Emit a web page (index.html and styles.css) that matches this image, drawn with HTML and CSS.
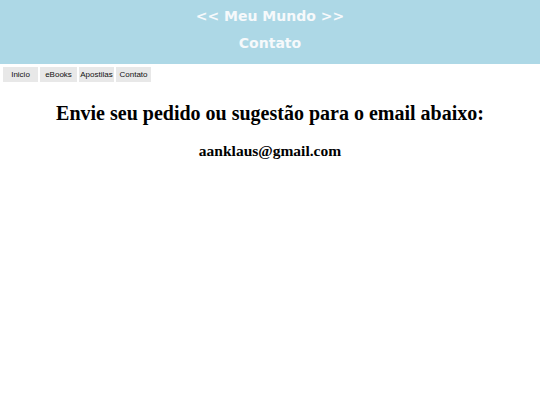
FILE: index.html
```html
<!DOCTYPE html>
<html lang="pt">
<head>
<meta charset="utf-8">
<title>Contato</title>
<link rel="stylesheet" href="styles.css">
</head>
<body>
<header class="topo">
  <div class="titulo">&lt;&lt; Meu Mundo &gt;&gt;</div>
  <div class="subtitulo">Contato</div>
</header>
<nav class="menu">
  <a class="item" href="#">Inicio</a>
  <a class="item item-largo" href="#">eBooks</a>
  <a class="item" href="#">Apostilas</a>
  <a class="item" href="#">Contato</a>
</nav>
<main class="conteudo">
  <h1 class="chamada">Envie seu pedido ou sugestão para o email abaixo:</h1>
  <p class="email">aanklaus@gmail.com</p>
</main>
</body>
</html>
```
FILE: styles.css
```css
html, body {
  margin: 0;
  padding: 0;
  background: #ffffff;
}
.topo {
  background: #add8e6;
  height: 64px;
  box-sizing: border-box;
  padding-top: 7px;
  text-align: center;
  color: #f6f9fb;
  font-family: "DejaVu Sans", Verdana, sans-serif;
  font-weight: bold;
  font-size: 14px;
}
.titulo {
  line-height: 18px;
}
.subtitulo {
  margin-top: 9px;
  line-height: 18px;
}
.menu {
  display: flex;
  gap: 2px;
  padding: 3px 3px 0;
}
.item {
  display: block;
  width: 35px;
  height: 15px;
  line-height: 15px;
  background: #e8e8e8;
  color: #111;
  text-align: center;
  text-decoration: none;
  font-family: "Liberation Sans", Arial, sans-serif;
  font-size: 8px;
}
.item-largo {
  width: 37px;
}
.conteudo {
  text-align: center;
  font-family: "Liberation Serif", "Times New Roman", serif;
  color: #000;
}
.chamada {
  font-size: 20px;
  font-weight: bold;
  margin: 19px 0 0;
  line-height: 24px;
}
.email {
  font-size: 15.5px;
  font-weight: bold;
  margin: 16px 0 0;
  line-height: 20px;
}
```
